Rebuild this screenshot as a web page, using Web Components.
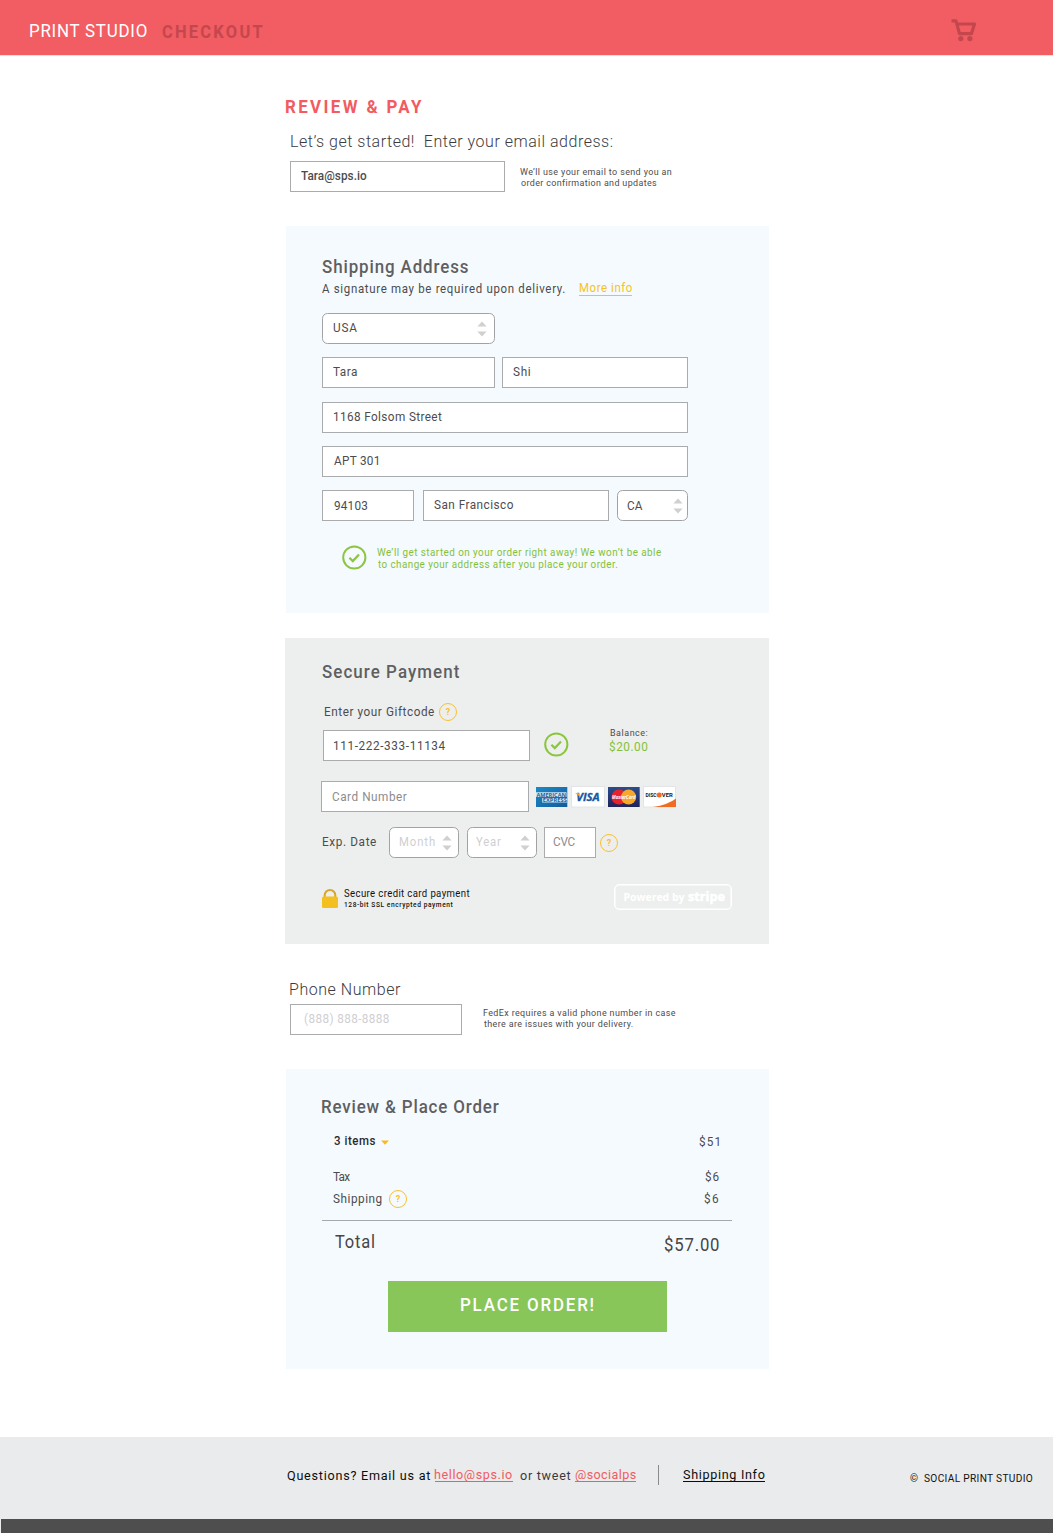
<!DOCTYPE html>
<html lang="en">
<head>
<meta charset="utf-8">
<title>Print Studio Checkout</title>
<style>
html,body{margin:0;background:#fff}
body{font-family:Roboto,"Liberation Sans",sans-serif;color:#4c4c4e;width:1053px;height:1533px;overflow:hidden}
</style>
</head>
<body>
<site-header>
  <form-row h="55">
    <fit-text l="29.5" t="23" w="117.5" s="18" c="#fff">PRINT STUDIO</fit-text>
    <fit-text l="14.5" t="24" w="101" s="17.5" b="700" c="#c4474d">CHECKOUT</fit-text>
    <cart-icon l="688.5" t="18"></cart-icon>
  </form-row>
</site-header>

<checkout-column>
  <form-row h="70"><fit-text l="1" t="43.5" w="136.5" s="18" b="700" c="#f15b61">REVIEW &amp; PAY</fit-text></form-row>
  <form-row h="36"><fit-text l="6" t="8.3" w="322" s="17" b="300" c="#3c3c3e">Let’s get started!&nbsp; Enter your email address:</fit-text></form-row>
  <form-row h="65">
    <text-field l="5" w="215"><fit-text l="10" t="6" w="66" s="12.5" b="500">Tara@sps.io</fit-text></text-field>
    <text-stack l="15" t="5">
      <fit-text w="152" s="9.5" lh="11">We’ll use your email to send you an</fit-text>
      <fit-text l="1" w="135.5" s="9.5" lh="11">order confirmation and updates</fit-text>
    </text-stack>
  </form-row>

  <form-panel l="1" w="483" h="387">
    <form-row h="53"><fit-text t="33" w="146.5" s="18" b="500" c="#5f5f61">Shipping Address</fit-text></form-row>
    <form-row h="34">
      <fit-text t="2" w="243.5" s="12.2">A signature may be required upon delivery.</fit-text>
      <fit-text l="13.5" t="1" w="53" s="12.2" c="#f4c224" u="15">More info</fit-text>
    </form-row>
    <form-row h="44"><select-field w="173"><fit-text l="10" t="6" w="24" s="12.5">USA</fit-text></select-field></form-row>
    <form-row h="45">
      <text-field w="173"><fit-text l="10" t="6" w="24.5" s="12.5">Tara</fit-text></text-field>
      <text-field l="7" w="186"><fit-text l="10" t="6" w="17.5" s="12.5">Shi</fit-text></text-field>
    </form-row>
    <form-row h="44"><text-field w="366"><fit-text l="10" t="6" w="108.5" s="12.5">1168 Folsom Street</fit-text></text-field></form-row>
    <form-row h="44"><text-field w="366"><fit-text l="11" t="6" w="45" s="12.5">APT 301</fit-text></text-field></form-row>
    <form-row h="55">
      <text-field w="92"><fit-text l="11" t="7" w="33.5" s="12.5">94103</fit-text></text-field>
      <text-field l="9" w="186"><fit-text l="10" t="6" w="79.5" s="12.5">San Francisco</fit-text></text-field>
      <select-field l="8" w="71" r="5"><fit-text l="9" t="7" w="15.5" s="12.5">CA</fit-text></select-field>
    </form-row>
    <form-row h="40">
      <check-icon l="20" t="0"></check-icon>
      <text-stack l="10" t="2">
        <fit-text w="284.5" s="10.5" lh="12" c="#84c136">We’ll get started on your order right away! We won’t be able</fit-text>
        <fit-text w="240" s="10.5" lh="12" c="#84c136">to change your address after you place your order.</fit-text>
      </text-stack>
    </form-row>
  </form-panel>

  <form-panel gray mt="25" l="0" w="484" h="306">
    <form-row h="60"><fit-text l="1" t="26" w="137.5" s="18" b="500" c="#5f5f61">Secure Payment</fit-text></form-row>
    <form-row h="32">
      <fit-text l="3" t="6" w="110" s="12.5">Enter your Giftcode</fit-text>
      <help-icon l="5" t="5"></help-icon>
    </form-row>
    <form-row h="51">
      <text-field l="2" w="207"><fit-text l="9.5" t="7" w="112" s="12.5">111-222-333-11134</fit-text></text-field>
      <check-icon l="13.5" t="1.5"></check-icon>
      <text-stack l="41" t="-5">
        <fit-text l="1" w="37.5" s="9.5">Balance:</fit-text>
        <fit-text t="-2" w="38.5" s="12.5" c="#84c136">$20.00</fit-text>
      </text-stack>
    </form-row>
    <form-row h="46">
      <text-field w="208"><fit-text l="10.5" t="7" w="75" s="12.5" c="#8c8c8e">Card Number</fit-text></text-field>
      <card-logos l="7" t="5"></card-logos>
    </form-row>
    <form-row h="57">
      <fit-text l="1" t="7" w="54" s="12.5">Exp. Date</fit-text>
      <select-field l="13" w="70" r="7"><fit-text l="9" t="6" w="35.5" s="12" c="#cfcfd1">Month</fit-text></select-field>
      <select-field l="8" w="70" r="7"><fit-text l="8" t="6" w="25.5" s="12" c="#cfcfd1">Year</fit-text></select-field>
      <text-field l="7" w="52"><fit-text l="8" t="6" w="22" s="12.5" c="#8c8c8e">CVC</fit-text></text-field>
      <help-icon l="4" t="6.5"></help-icon>
    </form-row>
    <form-row h="40">
      <lock-icon l="1" t="5"></lock-icon>
      <text-stack l="6" t="2">
        <fit-text w="126" s="10.2" c="#111">Secure credit card payment</fit-text>
        <fit-text t="-5.5" w="109" s="7" b="500" c="#111">128-bit SSL encrypted payment</fit-text>
      </text-stack>
      <stripe-badge l="144"></stripe-badge>
    </form-row>
  </form-panel>

  <form-row h="60"><fit-text l="4.5" t="37" w="111" s="17" b="300" c="#3c3c3e">Phone Number</fit-text></form-row>
  <form-row h="65">
    <text-field l="5" w="172"><fit-text l="13.5" t="6" w="85" s="12.5" c="#cfcfd1">(888) 888-8888</fit-text></text-field>
    <text-stack l="21.5" t="3">
      <fit-text w="192.5" s="9.5" lh="11">FedEx requires a valid phone number in case</fit-text>
      <fit-text w="149.5" s="9.5" lh="11">there are issues with your delivery.</fit-text>
    </text-stack>
  </form-row>

  <form-panel l="1" w="483" h="300">
    <form-row h="60"><fit-text t="30" w="177.5" s="18" b="500" c="#5f5f61">Review &amp; Place Order</fit-text></form-row>
    <form-row h="36" w="410">
      <fit-text l="12" t="4" w="41.5" s="12.2" b="500" c="#2a2a2c">3 items</fit-text>
      <drop-arrow l="5.5" t="10.5"></drop-arrow>
      <fit-text l="auto" r="13" t="5" w="20" s="12.5">$51</fit-text>
    </form-row>
    <form-row h="22" w="410">
      <fit-text l="11" t="4" w="17.5" s="12.5">Tax</fit-text>
      <fit-text l="auto" r="13" t="4" w="14" s="12.5">$6</fit-text>
    </form-row>
    <form-row h="33" w="410">
      <fit-text l="11" t="4" w="49" s="12.5">Shipping</fit-text>
      <help-icon l="7" t="2.5"></help-icon>
      <fit-text l="auto" r="13" t="4" w="14.5" s="12.5">$6</fit-text>
    </form-row>
    <rule-line w="410"></rule-line>
    <form-row h="60" w="410">
      <fit-text l="12.5" t="13" w="39.5" s="17.5" c="#454547">Total</fit-text>
      <fit-text l="auto" r="13" t="16" w="55" s="17.8" c="#454547">$57.00</fit-text>
    </form-row>
    <order-button l="66" w="279" h="51"><fit-text l="73" t="16" w="133" s="18" b="500" c="#fff">PLACE ORDER!</fit-text></order-button>
  </form-panel>
</checkout-column>

<site-footer>
  <form-row h="82">
    <fit-text l="287" t="30.5" w="143.5" s="13.4" c="#0c0c0c">Questions? Email us at</fit-text>
    <fit-text l="4" t="30" w="78" s="13.4" c="#f15b61" u="14">hello@sps.io</fit-text>
    <fit-text l="7.5" t="30.5" w="51" s="13.4" c="#3a3a3c">or tweet</fit-text>
    <fit-text l="4" t="30" w="61" s="13.4" c="#f15b61" u="14">@socialps</fit-text>
    <foot-divider l="22" t="28"></foot-divider>
    <fit-text l="24" t="30" w="82" s="13.4" c="#0c0c0c" u="14">Shipping Info</fit-text>
    <fit-text l="144.5" t="33.5" w="8.5" s="10.8" c="#111">©</fit-text>
    <fit-text l="6" t="33.5" w="109" s="10.8" c="#111">SOCIAL PRINT STUDIO</fit-text>
  </form-row>
</site-footer>

<script>
// Base element: reads spacing attributes (l, t, r, mt) and size attributes (w, h).
class Box extends HTMLElement {
  constructor() {
    super();
    this.attachShadow({ mode: 'open' }).innerHTML =
      '<style>:host{display:block;box-sizing:border-box;flex:none}' + (this.constructor.css || '') + '</style>' +
      (this.constructor.html || '<slot></slot>');
  }
  connectedCallback() {
    const px = v => v === 'auto' ? v : v + 'px';
    const map = { l: 'marginLeft', t: 'marginTop', mt: 'marginTop', w: 'width', h: 'height' };
    for (const k in map) if (this.hasAttribute(k)) this.style[map[k]] = px(this.getAttribute(k));
    this.ready();
  }
  ready() {}
}
const def = (name, css, html) => customElements.define(name, class extends Box {
  static css = css; static html = html;
});

// One line of slightly condensed text, tracked so that its ink fills the width w,
// less half a pixel of antialiasing on either side.
const pen = document.createElement('canvas').getContext('2d');
const CONDENSE = 0.94, FINE = 20, EDGE = 0.5;
customElements.define('fit-text', class extends Box {
  static css = ':host{white-space:nowrap}span{display:block;width:max-content;transform-origin:0 0}';
  static html = '<span><slot></slot></span>';
  ready() {
    const a = (k, d) => this.getAttribute(k) || d;
    const size = a('s', 12), weight = a('b', 400), text = this.textContent;
    pen.font = `${weight} ${size * FINE}px Roboto`;
    const m = pen.measureText(text);
    const left = m.actualBoundingBoxLeft / FINE;
    const ink = left + m.actualBoundingBoxRight / FINE;
    const gap = text.length > 1 ? ((a('w') - 2 * EDGE) / CONDENSE - ink) / (text.length - 1) : 0;
    const span = this.shadowRoot.querySelector('span');
    span.style.cssText = `font-size:${size}px;font-weight:${weight};line-height:${a('lh', 16)}px;` +
      `letter-spacing:${gap.toFixed(3)}px;margin-left:${(left * CONDENSE + EDGE).toFixed(2)}px;transform:scaleX(${CONDENSE})`;
    this.style.height = a('u', a('lh', 16)) + 'px';
    if (this.hasAttribute('c')) this.style.color = a('c');
    if (this.hasAttribute('r')) this.style.marginRight = a('r') + 'px';
    if (this.hasAttribute('u')) { this.style.boxSizing = 'content-box'; this.style.borderBottom = '1px solid'; }
  }
});

def('form-row', ':host{display:flex;align-items:flex-start}');
def('text-stack', ':host{display:flex;flex-direction:column}');
def('site-header', ':host{background:#f15d63;height:56px;border-bottom:1px solid #fbd9da}');
def('checkout-column', ':host{display:flex;flex-direction:column;width:484px;margin:-1px 0 68px 285px}');
def('form-panel', ':host{background:#f5faff;padding-left:36px}:host([gray]){background:#edefee}');
def('text-field', ':host{display:flex;height:31px;background:#fff;border:1px solid #a9abad}');
def('rule-line', ':host{height:1px;background:#a5a9ad}');
def('order-button', ':host{display:flex;background:#88c659}');
def('site-footer', ':host{background:#eaebec}:host::after{content:"";display:block;height:14px;margin-left:1px;background:#4e4e4e}');
def('foot-divider', ':host{width:1px;height:20px;background:#8b8b8d}');

customElements.define('select-field', class extends Box {
  static css = ':host{display:flex;height:31px;background:#fff;border:1px solid #a0a2a4;border-radius:5.5px}svg{margin:7px 7.5px 0 auto}';
  static html = '<slot></slot><svg width="10" height="16" viewBox="0 0 10 16"><path fill="#d0d0d1" d="M5 .6 9.6 5.5H.4zM.4 10.5h9.2L5 15.4z"/></svg>';
  ready() {
    if (this.hasAttribute('r')) this.shadowRoot.querySelector('svg').style.marginRight = this.getAttribute('r') - 0.5 + 'px';
  }
});

def('check-icon', ':host{width:25px;height:25px}svg{display:block}',
  '<svg width="25" height="25" viewBox="0 0 25 25" fill="none" stroke="#8cc540"><circle cx="12.3" cy="12.5" r="11.1" stroke-width="2"/><path d="M7.4 12.7l3.4 3.4 6.2-6.6" stroke-width="2.2"/></svg>');
def('help-icon', ':host{width:18px;height:18px;border:1.3px solid #fbc02d;border-radius:50%;color:#fbc02d;font:700 9px/16px Roboto,sans-serif;text-align:center}', '?');
def('drop-arrow', ':host{width:8px;height:5px}svg{display:block}',
  '<svg width="8" height="5" viewBox="0 0 8 5"><path fill="#fbb91f" d="M0 .4h8L4 4.7z"/></svg>');
def('cart-icon', ':host{width:26px;height:24px}svg{display:block}',
  '<svg width="26" height="24" viewBox="0 0 26 24"><path d="M.5 2.8H5L8.5 15.7H20.4L23.5 6H6.3" fill="none" stroke="#c4474d" stroke-width="3.2" stroke-linejoin="round"/><circle cx="9.8" cy="20.6" r="2.6" fill="#c4474d"/><circle cx="18.9" cy="20.6" r="2.6" fill="#c4474d"/></svg>');
def('lock-icon', ':host{width:16px;height:19px}svg{display:block}',
  '<svg width="16" height="19" viewBox="0 0 16 19"><path d="M2.7 9V6.3a5.3 5.3 0 0 1 10.6 0V9" fill="none" stroke="#d9a52a" stroke-width="2"/><rect y="7.6" width="16" height="11.4" rx="1.5" fill="#f4c01f"/></svg>');
def('stripe-badge', ':host{display:flex;width:118px;height:26px;border:1px solid #fff;border-radius:5px;box-shadow:inset 0 0 0 .5px #fff;color:#fff}svg{display:block}',
  '<svg width="115" height="23" viewBox="0 0 115 23" fill="#fff" font-family="Open Sans" font-weight="700"><text x="8.5" y="15.8" font-size="11" textLength="61" lengthAdjust="spacingAndGlyphs">Powered by</text><text x="73" y="15.8" font-size="13.2" stroke="#fff" stroke-width=".5" textLength="37" lengthAdjust="spacingAndGlyphs">stripe</text></svg>');
def('card-logos', ':host{width:141px;height:22px}svg{display:block}', `
<svg width="141" height="22" viewBox="0 0 141 22" font-family="Open Sans" font-weight="700">
  <defs><linearGradient id="am" x2="1" y2="1"><stop offset="0" stop-color="#1c8ac6"/><stop offset="1" stop-color="#155a9d"/></linearGradient>
  <linearGradient id="mc" x2="0" y2="1"><stop offset="0" stop-color="#2b4c8c"/><stop offset="1" stop-color="#20235c"/></linearGradient></defs>
  <rect y="1" width="31.3" height="20" fill="url(#am)"/>
  <path d="M0 6.3H30.5V11H0zM6.2 12H31v4.6H6.2z" fill="#d4e8f4"/>
  <g fill="#17639f" font-weight="700" font-size="5.4"><text x=".4" y="10.6" textLength="29.6" lengthAdjust="spacingAndGlyphs">AMERICAN</text><text x="6.8" y="16.3" textLength="24" lengthAdjust="spacingAndGlyphs">EXPRESS</text></g>
  <rect x="35.5" y=".5" width="33" height="20.5" fill="#fff" stroke="#e3e4e5"/>
  <text x="40.2" y="15" font-size="11" font-weight="700" font-style="italic" fill="#17579f" stroke="#17579f" stroke-width=".3" textLength="23.5" lengthAdjust="spacingAndGlyphs">VISA</text>
  <path d="M39 7h3.6l1.5 4.5Q42 8.3 39 7z" fill="#f5a81c"/>
  <rect x="72" y="1" width="31.7" height="20" fill="url(#mc)"/>
  <circle cx="83" cy="11" r="7.6" fill="#e6222a"/><circle cx="92.6" cy="11" r="7.6" fill="#f7a72b"/>
  <text x="76" y="13.3" font-size="6" font-style="italic" fill="#fff" textLength="23.5" lengthAdjust="spacingAndGlyphs">MasterCard</text>
  <rect x="107.5" y=".5" width="32" height="20.5" fill="#fff" stroke="#e3e4e5"/>
  <path d="M140 12.5V21h-23Q132 18.8 140 12.5z" fill="#f36b21"/>
  <circle cx="123.2" cy="9" r="2.5" fill="#f36b21"/>
  <g font-family="Roboto" font-size="6.2" fill="#222"><text x="109.4" y="11.3" textLength="11.2" lengthAdjust="spacingAndGlyphs">DISC</text><text x="125.8" y="11.3" textLength="11" lengthAdjust="spacingAndGlyphs">VER</text></g>
</svg>`);
</script>
</body>
</html>
